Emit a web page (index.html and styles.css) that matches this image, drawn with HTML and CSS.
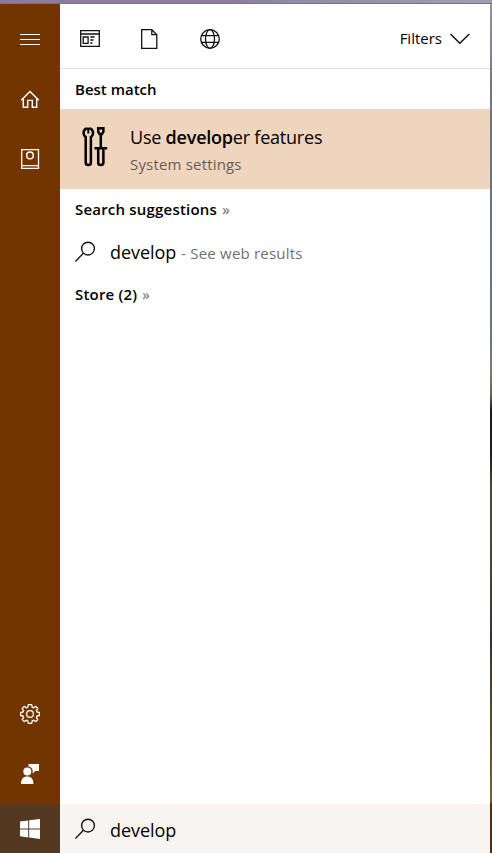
FILE: index.html
```html
<!DOCTYPE html>
<html lang="en">
<head>
<meta charset="utf-8">
<title>Search</title>
<link rel="stylesheet" href="styles.css">
</head>
<body>
<div class="desktop">
  <nav class="rail">
    <span class="rail-item"><svg width="20" height="20" viewBox="0 0 20 20"><path d="M0 5.5h20M0 10.5h20M0 15.5h20"/></svg></span>
    <span class="rail-item"><svg width="20" height="20" viewBox="0 0 20 20"><path stroke-width="1.4" d="M1.2 11.3 10 2.4l8.8 8.9M3.3 9.5v8.8h4.4v-6.9h4.6v6.9h4.4V9.5"/></svg></span>
    <span class="rail-item"><svg width="20" height="20" viewBox="0 0 20 20"><path stroke-width="1.3" d="M1.7.7h16.8v18.8H1.7zM1.7 16.6h16.8"/><circle cx="10" cy="6.4" r="3.3" stroke-width="1.5"/></svg></span>
    <span class="rail-item to-bottom"><svg width="20" height="20" viewBox="0 0 20 20"><path stroke-width="1.3" stroke-linejoin="round" d="M8.3.7h3.4l.5 2.5 1.4.6 2.2-1.4 2 2-1.4 2.2.6 1.4 2.4.5v3l-2.4.5-.6 1.4 1.4 2.2-2 2-2.2-1.4-1.4.6-.5 2.5H8.3l-.5-2.5-1.4-.6-2.2 1.4-2-2 1.4-2.2-.6-1.4-2.4-.5v-3L3 8l.6-1.4-1.4-2.2 2-2 2.2 1.4 1.4-.6z"/><circle cx="10" cy="10" r="3.4" stroke-width="1.3"/></svg></span>
    <span class="rail-item"><svg class="solid" width="20" height="20" viewBox="0 0 20 20"><path d="M8.5 0H19v7h-3.7L12.7 9.4V7.2A5 5 0 0 0 8.5 2.4z"/><circle cx="7.3" cy="7.5" r="4"/><path d="M1 20c0-5 2.2-7.6 6.2-7.6s6.2 2.6 6.2 7.6z"/></svg></span>
    <span class="rail-item start"><svg class="solid" width="20" height="20" viewBox="0 0 20 20"><path d="M0 2.6 8.2 1.5v7.9H0zM9.2 1.3 20 0v9.4H9.2zM0 10.4h8.2v8L0 17.3zM9.2 10.4H20V20L9.2 18.5z"/></svg></span>
  </nav>
  <main class="panel">
    <header class="tabs">
      <svg class="tab" width="20" height="20" viewBox="0 0 20 20"><path stroke-width="1.3" d="M.7 1.7h18.6v15.6H.7zM.7 5h18.6M3.2 8h4.9v6.3H3.2zM10.3 8h4.3M10.3 11h3.2M10.3 14h2.2"/></svg>
      <svg class="tab" width="20" height="20" viewBox="0 0 20 20"><path stroke-width="1.3" d="M1.7.7h10.1l5 5v13.6H1.7zM11.8.7v5h5"/></svg>
      <svg class="tab" width="20" height="20" viewBox="0 0 20 20"><g stroke-width="1.3"><circle cx="10" cy="10" r="9.3"/><ellipse cx="10" cy="10" rx="4.5" ry="9.3"/><path d="M1.2 6.7h17.6M1.2 13.3h17.6"/></g></svg>
      <span class="filters"><span class="filters-label">Filters</span><svg width="20" height="12" viewBox="0 0 20 12"><path stroke-width="1.5" d="m.5 1 9.3 9.3L19.3 1"/></svg></span>
    </header>
    <h2 class="heading first">Best match</h2>
    <section class="best">
      <svg class="tools" width="26" height="42" viewBox="0 0 26 42"><path stroke-width="2.5" d="M4.6 2.4A4.9 4.9 0 0 0 3.7 11v25.4a2.6 2.6 0 0 0 5.2 0V11A4.9 4.9 0 0 0 8 2.4"/><path stroke-width="2" d="M4.3 2.1 6.3 3l2-.9M6.3 2.6v5"/><path stroke-width="2.5" d="M16.2 2.2h5.2v3.5L20.1 8h-2.6l-1.3-2.3zM18.8 8v14M12.5 22.2h12.7M16.2 23v13.4a2.6 2.6 0 0 0 5.2 0V23"/></svg>
      <div class="best-text">
        <div class="title">Use <b>develop</b>er features</div>
        <div class="subtitle">System settings</div>
      </div>
    </section>
    <h2 class="heading spaced">Search suggestions <span class="more">»</span></h2>
    <div class="suggestion">
      <svg width="22" height="22" viewBox="0 0 22 22"><circle cx="13" cy="7.6" r="6.4" stroke-width="1.4"/><path stroke-width="1.4" d="M8.4 12.2.3 20.6"/></svg>
      <span class="query">develop</span><span class="hint">- See web results</span>
    </div>
    <h2 class="heading spaced">Store (2) <span class="more">»</span></h2>
    <footer class="searchbar">
      <svg width="22" height="22" viewBox="0 0 22 22"><circle cx="13" cy="7.6" r="6.4" stroke-width="1.4"/><path stroke-width="1.4" d="M8.4 12.2.3 20.6"/></svg>
      <span class="query">develop</span>
    </footer>
  </main>
  <div class="edge"></div>
</div>
</body>
</html>
```
FILE: styles.css
```css
* { box-sizing: border-box; }
body { margin: 0; font-family: "Open Sans", "Noto Sans", sans-serif; color: #000; }
svg { display: block; flex: none; fill: none; stroke: #111; }
.desktop {
  display: grid; grid-template-columns: 60px 430px 2px; width: 492px; height: 853px;
  padding-top: 4px; overflow: hidden;
  background: linear-gradient(#77738a, #77738a) 0 3px / 100% 1px no-repeat,
    linear-gradient(90deg, #897ba0, #8d7a9b 45%, #938ba7 60%, #a19bb5);
}
.rail { display: flex; flex-direction: column; background: #733500; padding-top: 5px; }
.rail svg { stroke: #fff; }
.rail svg.solid { fill: #fff; stroke: none; }
.rail-item { height: 60px; display: flex; align-items: center; justify-content: center; flex: none; }
.to-bottom { margin-top: auto; }
.start { height: 49px; background: #543820; }
.panel { display: flex; flex-direction: column; background: #fff; min-width: 0; }
.tabs { height: 65px; flex: none; display: flex; align-items: center; gap: 40px; padding: 5px 20px 0; border-bottom: 1px solid #dedede; }
.filters { margin-left: auto; display: flex; align-items: center; gap: 8px; font-size: 15px; }
.filters-label { padding-bottom: 2px; }
.heading { margin: 0; height: 42px; flex: none; padding-left: 15px; font-size: 15px; line-height: 41px; font-weight: 600; white-space: nowrap; }
.heading.first { height: 40px; }
.heading.spaced { letter-spacing: .2px; }
.more { margin-left: 1px; font-weight: 400; color: #666; }
.best { height: 80px; flex: none; display: flex; padding-left: 22px; background: #f0d5be; }
.tools { margin: 17px 22px 0 0; stroke: #000; }
.best-text { padding-top: 14px; }
.title { font-size: 18px; line-height: 28px; letter-spacing: -.22px; white-space: nowrap; }
.title b { font-weight: 600; }
.subtitle { font-size: 15px; line-height: 27px; letter-spacing: .18px; color: #685d54; }
.suggestion { height: 43px; flex: none; display: flex; padding: 10px 0 0 15px; line-height: 22px; }
.query { margin-left: 13px; font-size: 18px; letter-spacing: -.06px; }
.hint { margin-left: 5px; font-size: 15px; line-height: 24px; letter-spacing: .2px; color: #707070; }
.searchbar { margin-top: auto; height: 49px; display: flex; padding: 14px 0 0 15px; line-height: 24px; background: #f8f4f1; }
.edge { background: linear-gradient(#98909f, #77768d 9%, #5d7788 20%, #657988 40%, #827c72 43%, #756041 46%, #161713 48%, #211e1b 53%, #514530 57%, #514530 64%, #3d3226 75%, #675129 88%, #7c6131 94%, #542d06 94.2%, #542d06); }
```
